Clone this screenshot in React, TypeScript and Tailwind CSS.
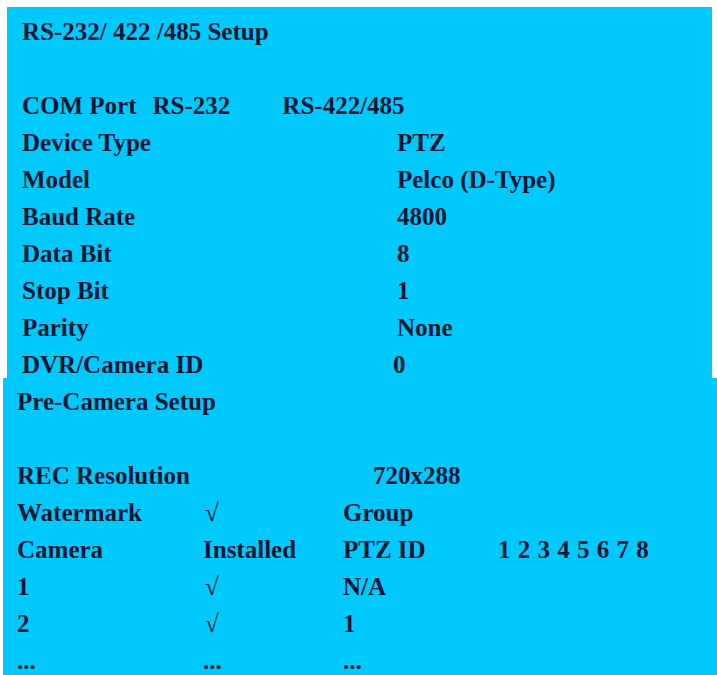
const serialRows: [string, string, string?][] = [
  ["Device Type", "PTZ"],
  ["Model", "Pelco (D-Type)"],
  ["Baud Rate", "4800"],
  ["Data Bit", "8"],
  ["Stop Bit", "1"],
  ["Parity", "None"],
  ["DVR/Camera ID", "0", "-ml-1"],
];

const cameraRows = [
  ["1", "√", "N/A"],
  ["2", "√", "1"],
  ["...", "...", "..."],
];

function SerialPanel() {
  return (
    <section className="ml-[7px] mt-[7px] h-[371px] w-[705px] bg-[#02c9fc] pl-[15px] pt-[6px]">
      <h2 className="leading-[37px]">RS-232/ 422 /485 Setup</h2>
      <div className="h-[37px]" />
      <div className="flex leading-[37px]">
        <span>COM Port</span>
        <span className="ml-[16px]">RS-232</span>
        <span className="ml-[52px]">RS-422/485</span>
      </div>
      {serialRows.map(([label, value, shift]) => (
        <div key={label} className="grid grid-cols-[375px_1fr] leading-[37px]">
          <span>{label}</span>
          <span className={shift}>{value}</span>
        </div>
      ))}
    </section>
  );
}

function CameraPanel() {
  return (
    <section className="ml-[3px] h-[297px] w-[714px] bg-[#02c9fc] pl-[14px] pt-[5px]">
      <h2 className="leading-[37px]">Pre-Camera Setup</h2>
      <div className="h-[37px]" />
      <div className="grid grid-cols-[356px_1fr] leading-[37px]">
        <span>REC Resolution</span>
        <span>720x288</span>
      </div>
      <div className="grid grid-cols-[186px_140px_155px_1fr] leading-[37px]">
        <span>Watermark</span>
        <span className="pl-[2px] font-normal">√</span>
        <span>Group</span>
        <span />
      </div>
      <div className="grid grid-cols-[186px_140px_155px_1fr] leading-[37px]">
        <span>Camera</span>
        <span>Installed</span>
        <span>PTZ ID</span>
        <span className="[word-spacing:1px]">1 2 3 4 5 6 7 8</span>
      </div>
      {cameraRows.map(([cam, installed, ptz], i) => (
        <div key={i} className="grid grid-cols-[186px_140px_155px_1fr] leading-[37px]">
          <span>{cam}</span>
          <span className={installed === "√" ? "pl-[2px] font-normal" : ""}>{installed}</span>
          <span>{ptz}</span>
          <span />
        </div>
      ))}
    </section>
  );
}

export default function App() {
  return (
    <div className="h-[675px] w-[717px] overflow-hidden bg-white font-['Liberation_Serif','Times_New_Roman',serif] text-[25px] font-bold text-[#0a1633]">
      <SerialPanel />
      <CameraPanel />
    </div>
  );
}
